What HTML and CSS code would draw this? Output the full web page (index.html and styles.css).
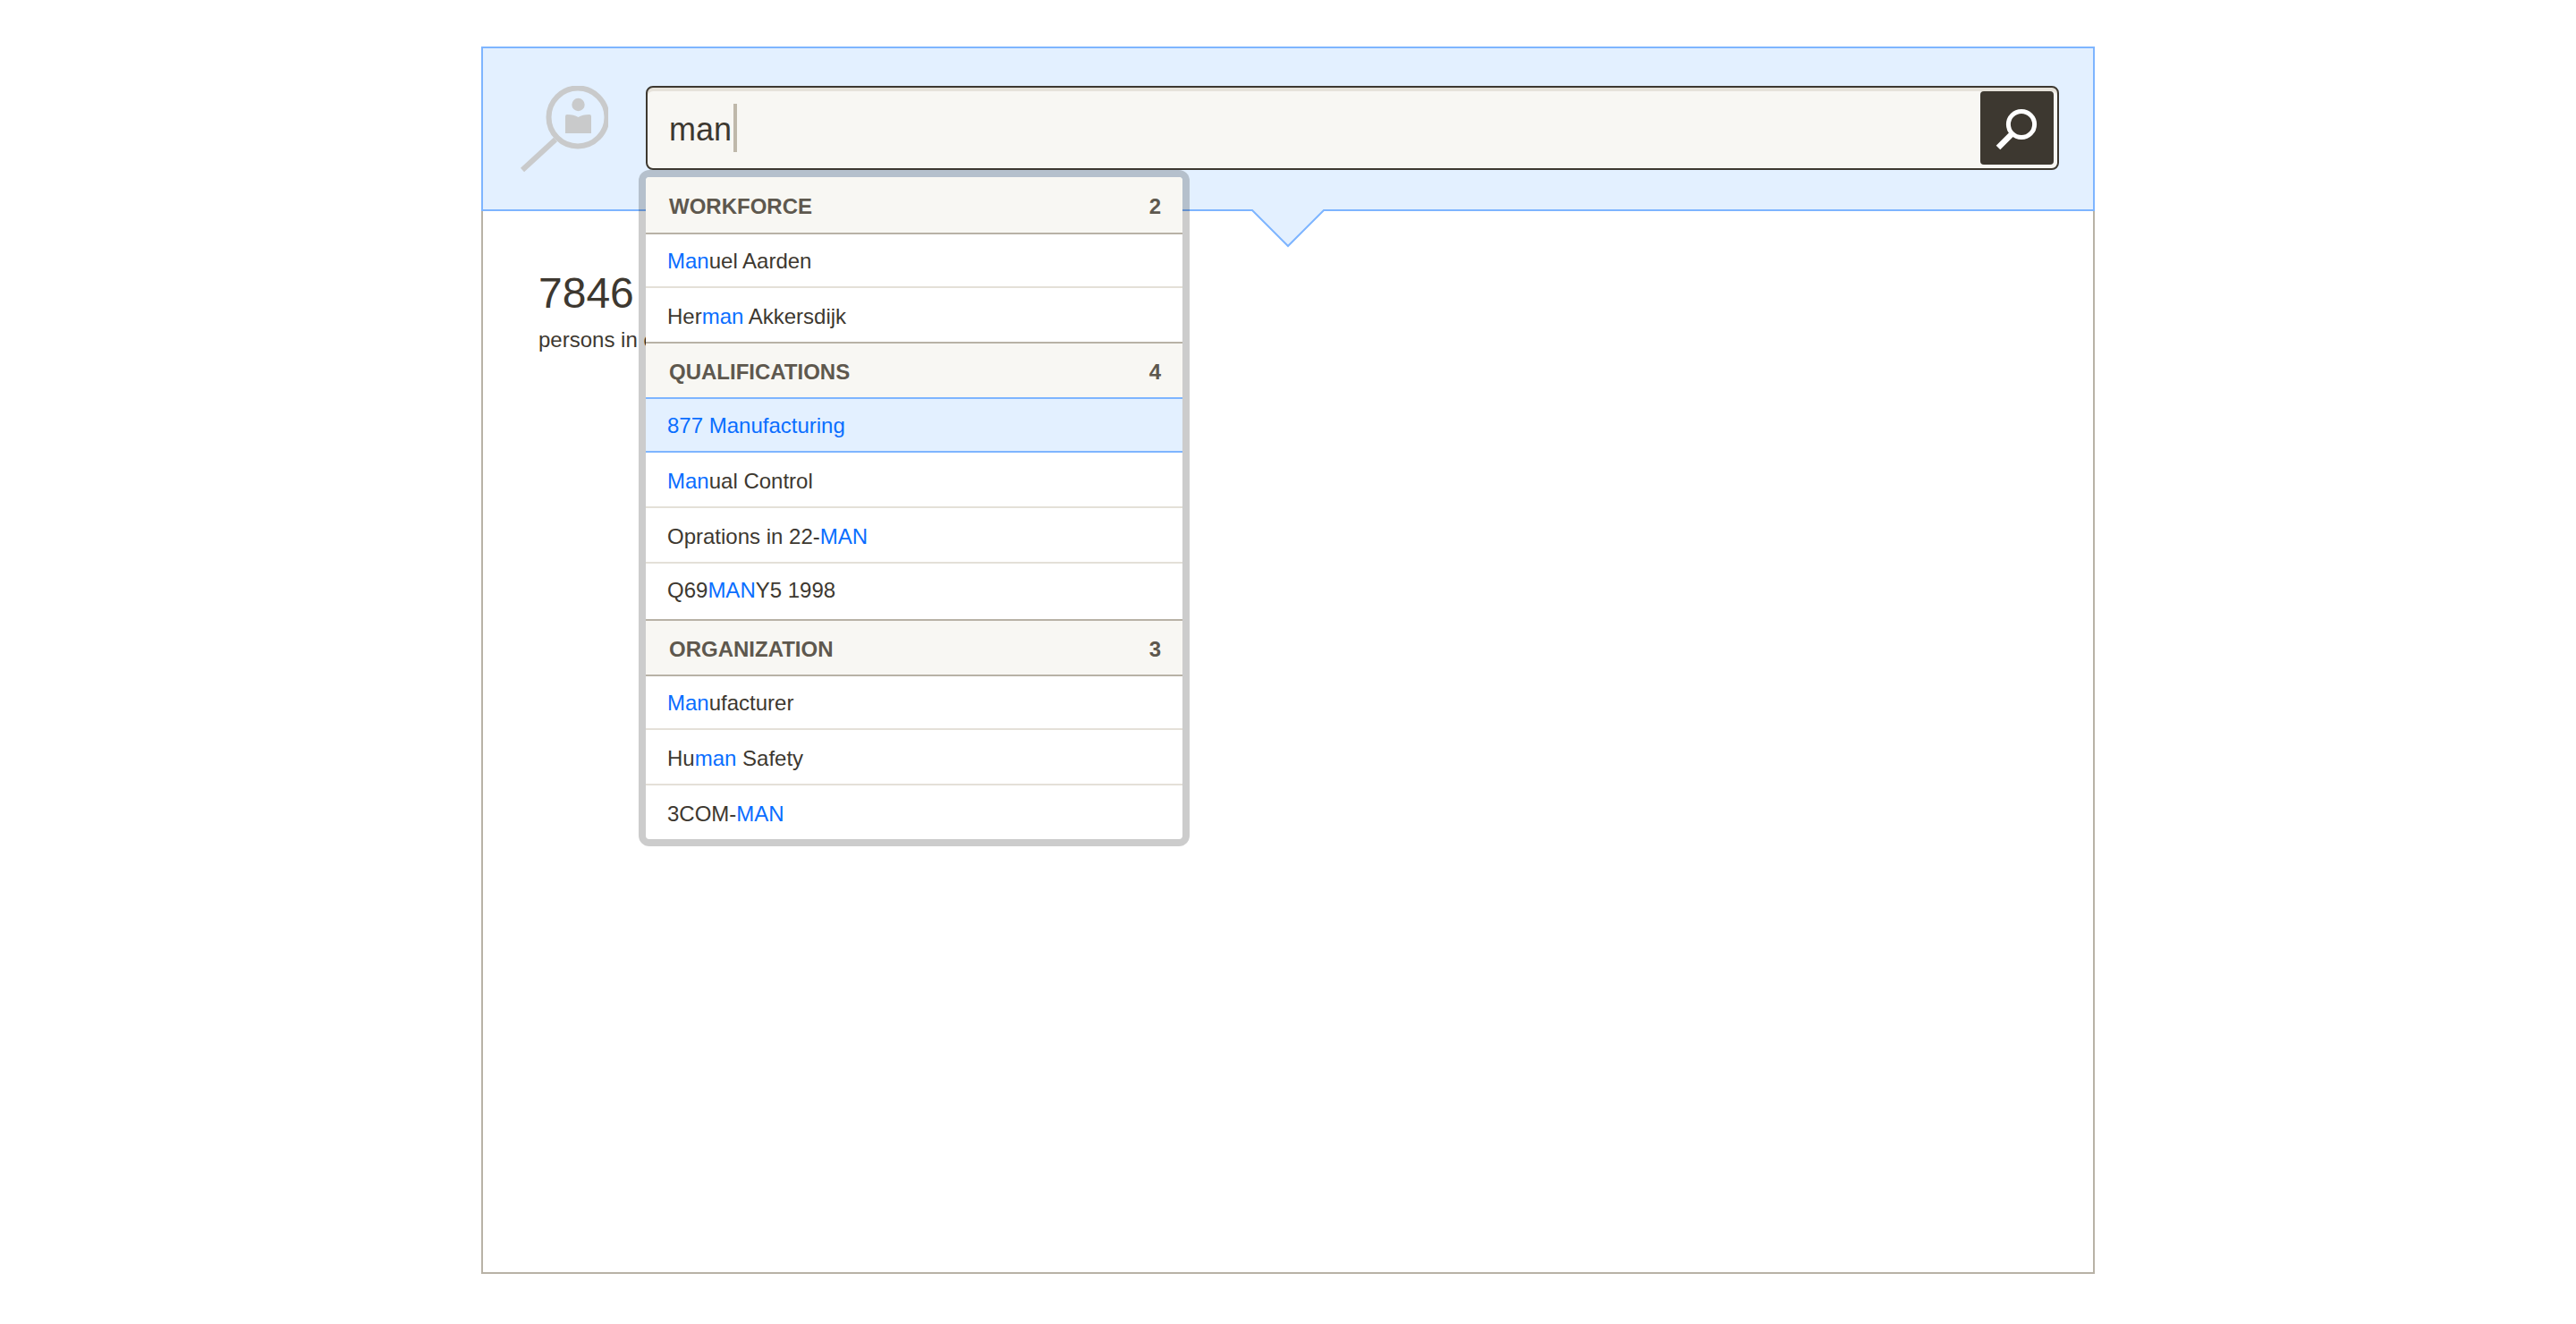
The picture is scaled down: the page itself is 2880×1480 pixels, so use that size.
FILE: index.html
```html
<!DOCTYPE html>
<html lang="en">
<head>
<meta charset="utf-8">
<title>Search</title>
<link rel="stylesheet" href="styles.css">
</head>
<body>
<main class="frame">
  <header class="band">
    <svg class="brand" width="100" height="100" viewBox="0 0 100 100" aria-hidden="true">
      <circle cx="66" cy="35" r="32.5" fill="none" stroke="#c9cacb" stroke-width="6"/>
      <path d="M41 60 L4 94" fill="none" stroke="#c9cacb" stroke-width="6"/>
      <circle cx="66.5" cy="21" r="7.2" fill="#c9cacb"/>
      <path d="M52 34 Q52 32 54 32 Q62 32 66.5 35 Q71 32 79 32 Q81 32 81 34 L81 53 L52 53 Z" fill="#c9cacb"/>
    </svg>
    <div class="search">
      <span class="query">man</span><span class="caret"></span>
      <button class="go" type="button" aria-label="Search">
        <svg width="82" height="82" viewBox="0 0 82 82" aria-hidden="true">
          <circle cx="46" cy="37" r="14.6" fill="none" stroke="#fff" stroke-width="5"/>
          <path d="M35 48 L20 63" fill="none" stroke="#fff" stroke-width="6.5"/>
        </svg>
      </button>
    </div>
    <svg class="notch" width="84" height="44" viewBox="0 0 84 44" aria-hidden="true">
      <path d="M2 0 H82 V2 L42 42 L2 2 Z" fill="#e3f0ff"/>
      <path d="M0 1 H2 L42 41 L82 1 H84" fill="none" stroke="#7eb5ff" stroke-width="2"/>
    </svg>
  </header>

  <section class="summary">
    <div class="count">7846</div>
    <div class="caption">persons in company</div>
  </section>

  <div class="drop">
    <div class="head"><span>WORKFORCE</span><span>2</span></div>
    <div class="row short"><span><b class="hit">Man</b>uel Aarden</span></div>
    <div class="row end"><span>Her<b class="hit">man</b> Akkersdijk</span></div>
    <div class="head pre-active"><span>QUALIFICATIONS</span><span>4</span></div>
    <div class="row short active"><span>877 Manufacturing</span></div>
    <div class="row"><span><b class="hit">Man</b>ual Control</span></div>
    <div class="row"><span>Oprations in 22-<b class="hit">MAN</b></span></div>
    <div class="row end tall"><span>Q69<b class="hit">MAN</b>Y5 1998</span></div>
    <div class="head"><span>ORGANIZATION</span><span>3</span></div>
    <div class="row short"><span><b class="hit">Man</b>ufacturer</span></div>
    <div class="row"><span>Hu<b class="hit">man</b> Safety</span></div>
    <div class="row last"><span>3COM-<b class="hit">MAN</b></span></div>
  </div>
</main>
</body>
</html>
```
FILE: styles.css
```css
* { box-sizing: border-box; }
html, body { margin: 0; background: #fff; }
body { padding-top: 52px; font-family: "Liberation Sans", Arial, sans-serif; color: #3d3830; }

.frame {
  position: relative;
  width: 1804px;
  height: 1372px;
  margin: 0 auto;
  border: 2px solid #b8b2a6;
  border-top: 0;
}

.band {
  position: relative;
  display: flex;
  align-items: flex-start;
  height: 184px;
  margin: 0 -2px;
  padding: 42px 38px 0 40px;
  background: #e3f0ff;
  border: 2px solid #7eb5ff;
}
.brand { flex: none; margin-right: 42px; }

.search {
  flex: 1;
  display: flex;
  align-items: center;
  height: 94px;
  padding: 4px 4px 4px 24px;
  background: #f8f7f3;
  border: 2px solid #3d3830;
  border-radius: 8px;
  box-shadow: inset 0 4px 0 #e6e2da;
}
.query { padding-top: 4px; font-size: 36px; }
.caret { width: 4px; height: 54px; margin-left: 2px; background: #bfb8aa; }
.go {
  display: block;
  width: 82px;
  height: 82px;
  margin-left: auto;
  padding: 0;
  border: 0;
  border-radius: 4px;
  background: #3d3830;
}
.go svg { display: block; }

.notch { position: absolute; left: 858px; bottom: -44px; }

.summary { padding: 64px 0 0 62px; }
.count { font-size: 48px; line-height: 56px; }
.caption { margin-top: 10px; font-size: 24px; line-height: 28px; }

.drop {
  position: absolute;
  left: 174px;
  top: 138px;
  width: 616px;
  height: 756px;
  display: grid;
  grid-template-rows: 64px 60px 62px 62px 60px 62px 62px 64px 62px 60px 62px 60px;
  border: 8px solid rgba(0, 0, 0, .2);
  border-radius: 12px;
  background: #fff;
  background-clip: padding-box;
}

.head {
  display: flex;
  align-items: center;
  justify-content: space-between;
  padding: 4px 24px 0 26px;
  background: #f8f7f3;
  border-bottom: 2px solid #b8b2a6;
  font-size: 24px;
  font-weight: 700;
  color: #5e584e;
}
.head:first-child { border-radius: 4px 4px 0 0; }
.head.pre-active { border-bottom-color: #7eb5ff; }

.row {
  display: flex;
  align-items: center;
  padding: 3px 24px 0;
  border-bottom: 2px solid #e4e0d8;
  font-size: 24px;
}
.row.short { padding-top: 2px; }
.row.tall { padding-top: 1px; padding-bottom: 3px; }
.row.end { border-bottom-color: #b8b2a6; }
.row.last { border-bottom: 0; border-radius: 0 0 4px 4px; }
.row.active { background: #e3f0ff; color: #0a6eff; border-bottom-color: #7eb5ff; }
.hit { font-weight: 400; color: #0a6eff; }
```
